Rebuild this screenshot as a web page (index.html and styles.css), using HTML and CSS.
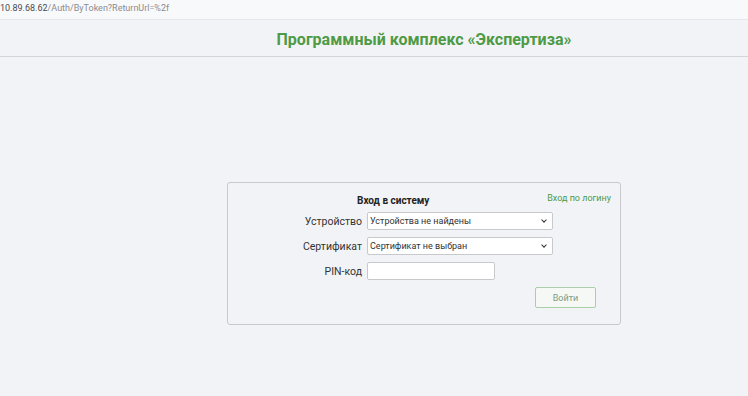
FILE: index.html
```html
<!DOCTYPE html>
<html>
<head>
    <title>Программный комплекс «Экспертиза»</title>
    <link rel="stylesheet" href="styles.css">
</head>
<body>

<div class="address-bar">
    <span class="host">10.89.68.62</span>/Auth/ByToken?ReturnUrl=%2f
</div>

<div class="header">
    <h1>Программный комплекс «Экспертиза»</h1>
</div>

<div class="content">
    <div class="login-box">
        <div class="login-head">
            <span class="login-title">Вход в систему</span>
            <a class="login-link" href="#">Вход по логину</a>
        </div>

        <div class="form-row">
            <label for="device">Устройство</label>
            <div class="select-wrap">
                <select id="device" class="field field-wide">
                    <option>Устройства не найдены</option>
                </select>
            </div>
        </div>

        <div class="form-row">
            <label for="cert">Сертификат</label>
            <div class="select-wrap">
                <select id="cert" class="field field-wide">
                    <option>Сертификат не выбран</option>
                </select>
            </div>
        </div>

        <div class="form-row">
            <label for="pin">PIN-код</label>
            <input type="password" id="pin" class="field field-short">
        </div>

        <div class="form-actions">
            <button class="login-button">Войти</button>
        </div>
    </div>
</div>

</body>
</html>
```

FILE: styles.css
```css
:root {
    --page-bg: #f2f3f6;
    --top-bg: #f8f9fb;
    --line: #d4d5d8;
    --green: #4e9a45;
    --text: #222;
    --field-border: #c8c9cc;
}

html, body {
    margin: 0;
    padding: 0;
}

body {
    font-family: Roboto, "Liberation Sans", sans-serif;
    background-color: var(--page-bg);
    color: var(--text);
    height: 396px;
    overflow: hidden;
}

.address-bar {
    height: 20px;
    box-sizing: border-box;
    padding: 3px 0 0 0;
    font-size: 9px;
    color: #8a8c90;
    background-color: var(--top-bg);
    border-bottom: 1px solid #e6e7ea;
    white-space: nowrap;
}

.address-bar .host {
    color: #4a4b4f;
}

.header {
    height: 37px;
    box-sizing: border-box;
    border-bottom: 1px solid var(--line);
    padding: 3px 0 0 100px;
    display: flex;
    align-items: center;
    justify-content: center;
}

.header h1 {
    margin: 0;
    font-size: 16px;
    font-weight: bold;
    color: var(--green);
}

.content {
    padding: 125px 0 0 100px;
    display: flex;
    justify-content: center;
}

.login-box {
    width: 394px;
    height: 143px;
    box-sizing: border-box;
    border: 1px solid var(--field-border);
    border-radius: 3px;
    padding: 10px 9px 0 0;
}

.login-head {
    display: flex;
    align-items: flex-start;
    height: 19px;
}

.login-title {
    margin-left: 129px;
    margin-top: 2px;
    font-size: 10px;
    font-weight: bold;
    color: #222;
}

.login-link {
    margin-left: auto;
    font-size: 9px;
    color: var(--green);
    text-decoration: none;
}

.form-row {
    display: flex;
    align-items: center;
    margin-bottom: 7px;
}

.form-row label {
    width: 134px;
    text-align: right;
    padding-right: 5px;
    font-size: 10.5px;
    color: #333;
}

.select-wrap {
    position: relative;
}

.select-wrap::after {
    content: "";
    position: absolute;
    right: 7px;
    top: 6px;
    width: 3px;
    height: 3px;
    border-right: 1.5px solid #333;
    border-bottom: 1.5px solid #333;
    transform: rotate(45deg);
    pointer-events: none;
}

.field {
    height: 18px;
    box-sizing: border-box;
    border: 1px solid var(--field-border);
    border-radius: 2px;
    background-color: #fff;
    font-family: Roboto, "Liberation Sans", sans-serif;
    font-size: 9px;
    color: #333;
    padding: 0 2px;
}

select.field {
    appearance: none;
    -webkit-appearance: none;
    display: block;
}

.field-wide {
    width: 186px;
}

.field-short {
    width: 128px;
}

.form-actions {
    display: flex;
    justify-content: flex-end;
    padding-right: 15px;
    margin-top: 1px;
}

.login-button {
    width: 61px;
    height: 21px;
    border: 1px solid #a9cfa9;
    border-radius: 2px;
    background-color: #f6f8f6;
    color: #7d9b7d;
    font-family: Roboto, "Liberation Sans", sans-serif;
    font-size: 9px;
    cursor: pointer;
}
```
